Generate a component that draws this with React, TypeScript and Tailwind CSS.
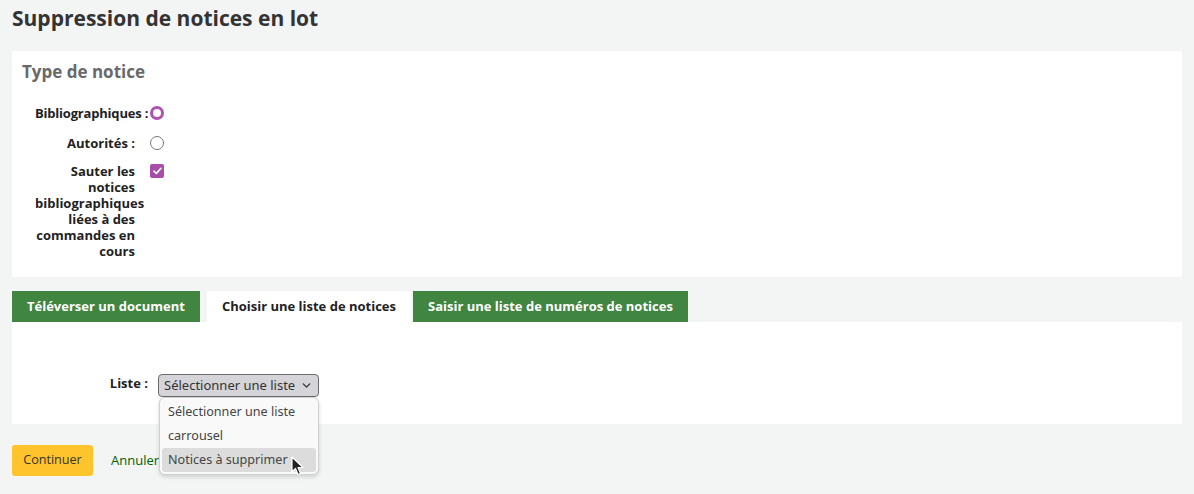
import { ChevronDown } from "lucide-react";

function Cursor() {
  return (
    <svg width="14" height="20" viewBox="0 0 14 20" className="absolute left-[291px] top-[456px]">
      <path d="M1 1 L1 16 L4.5 12.5 L7 18.5 L9.5 17.5 L7 11.5 L12 11.5 Z" fill="#222" stroke="#fff" strokeWidth="1.2" strokeLinejoin="round" />
    </svg>
  );
}

export default function App() {
  return (
    <div className="relative min-h-[494px] bg-[#f3f4f4] px-3 pb-5 font-['Open_Sans',sans-serif] text-[#222]">
      <h1 className="pt-[4px] text-[21px] font-bold leading-[28px] text-[#333]">
        Suppression de notices en lot
      </h1>

      {/* Type de notice */}
      <div className="mt-[19px] bg-white px-[10px] pt-[9px] pb-[18px]">
        <h2 className="text-[17px] font-bold leading-[24px] text-[#696969]">Type de notice</h2>

        <ol className="mt-[21px] flex flex-col text-[13px] font-bold leading-[16px]">
          <li className="flex items-start">
            <label className="ml-[13px] w-[100px] whitespace-nowrap text-right tracking-[-0.2px]">Bibliographiques&nbsp;:</label>
            <span className="ml-[15px] mt-[1px] block h-[14px] w-[14px] rounded-full border-[3px] border-[#b04fb4]" />
          </li>
          <li className="mt-[14px] flex items-start">
            <label className="ml-[13px] w-[100px] text-right">Autorités&nbsp;:</label>
            <span className="ml-[15px] mt-[1px] block h-[14px] w-[14px] rounded-full border border-[#777]" />
          </li>
          <li className="mt-[12px] flex items-start">
            <label className="ml-[13px] w-[100px] text-right">
              Sauter les notices bibliographiques liées à des commandes en cours
            </label>
            <span className="ml-[15px] mt-[1px] flex h-[14px] w-[14px] items-center justify-center rounded-[2px] bg-[#a94dab]">
              <svg width="9" height="8" viewBox="0 0 9 8">
                <path d="M1 4.2 L3.4 6.4 L8 1.3" fill="none" stroke="#fff" strokeWidth="1.7" strokeLinecap="round" strokeLinejoin="round" />
              </svg>
            </span>
          </li>
        </ol>
      </div>

      {/* Tabs */}
      <div className="mt-[14px] flex text-[13px] font-bold leading-[31px]">
        <div className="bg-[#408540] px-[15px] text-white">Téléverser un document</div>
        <div className="ml-[7px] bg-white px-[15px] text-[#222]">Choisir une liste de notices</div>
        <div className="ml-[2px] bg-[#408540] px-[15px] text-white">Saisir une liste de numéros de notices</div>
      </div>

      <div className="h-[102px] bg-white pt-[53px]">
        <div className="flex items-start">
          <label className="w-[136px] text-right text-[13px] font-bold leading-[16px]">Liste&nbsp;:</label>
          <div className="ml-[10px] -mt-[1px] flex h-[23px] w-[161px] items-center justify-between rounded-[4px] border border-[#6b6b70] bg-[#d4d4d9] pl-[5px] pr-[5px] font-['Noto_Sans',sans-serif] text-[13px] text-[#333]">
            <span>Sélectionner une liste</span>
            <ChevronDown size={13} strokeWidth={2.5} />
          </div>
        </div>
      </div>

      <div className="mt-[21px] flex items-center">
        <button className="h-[31px] w-[81px] rounded-[3px] bg-[#ffc32b] text-center text-[12.6px] text-[#333]">Continuer</button>
        <a className="ml-[18px] text-[13px] text-[#006100]">Annuler</a>
      </div>

      {/* Open select menu */}
      <div className="absolute left-[159px] top-[397px] w-[160px] rounded-[6px] border border-[#d0d0d0] bg-[#f9f9f9] p-[2px] font-['Noto_Sans',sans-serif] text-[12.6px] leading-[24px] text-[#444] shadow-[0_2px_4px_rgba(0,0,0,0.15)]">
        <div className="px-[6px]">Sélectionner une liste</div>
        <div className="px-[6px]">carrousel</div>
        <div className="rounded-[3px] bg-[#dcdcdc] px-[6px]">Notices à supprimer</div>
      </div>
      <Cursor />
    </div>
  );
}
